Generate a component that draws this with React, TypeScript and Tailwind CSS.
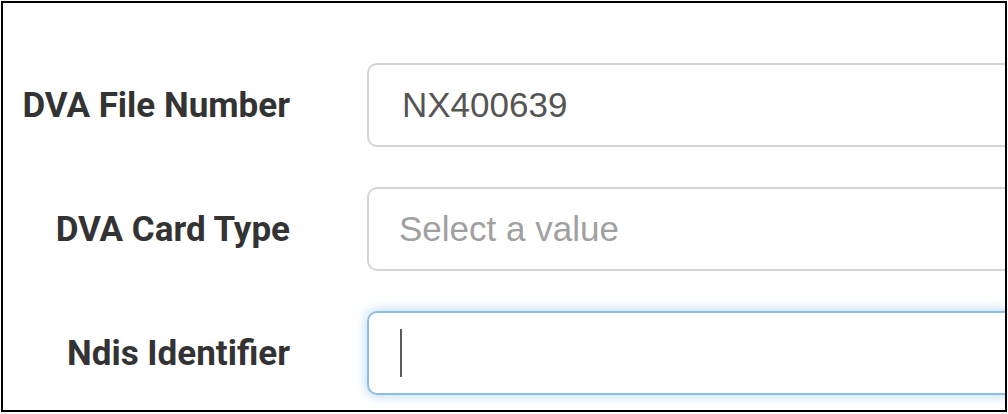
import React from "react";

function Row({ label, children }: { label: string; children: React.ReactNode }) {
  return (
    <div className="flex items-center h-[84px]">
      <div className="w-[287px] shrink-0 text-right font-bold text-[35px] text-[#333333] leading-none" style={{ fontFamily: 'Roboto, "Liberation Sans", sans-serif' }}>
        {label}
      </div>
      <div className="ml-[77px] shrink-0">{children}</div>
    </div>
  );
}

export default function App() {
  return (
    <div className="w-[1008px] h-[414px] bg-white relative overflow-hidden">
      <div className="ml-[1px] mt-[1px] w-[1006px] h-[411px] border-2 border-black overflow-hidden bg-white">
        <div className="pt-[60px] flex flex-col gap-[40px]">
          <Row label="DVA File Number">
            <div className="w-[700px] h-[84px] border-2 border-[#d4d4d4] rounded-[10px] flex items-center pl-[33px] text-[35px] text-[#555555]" style={{ fontFamily: '"Liberation Sans", Arial, sans-serif' }}>
              NX400639
            </div>
          </Row>
          <Row label="DVA Card Type">
            <div className="w-[700px] h-[84px] border-2 border-[#d4d4d4] rounded-[10px] flex items-center pl-[30px] text-[35px] text-[#a0a0a0]" style={{ fontFamily: '"Liberation Sans", Arial, sans-serif' }}>
              Select a value
            </div>
          </Row>
          <Row label="Ndis Identifier">
            <div className="w-[700px] h-[84px] border-2 border-[#8bbde6] rounded-[10px] flex items-center pl-[31px] shadow-[0_0_12px_rgba(102,175,233,0.55)]">
              <div className="w-[2px] h-[48px] bg-[#5a5a5a]" />
            </div>
          </Row>
        </div>
      </div>
    </div>
  );
}
